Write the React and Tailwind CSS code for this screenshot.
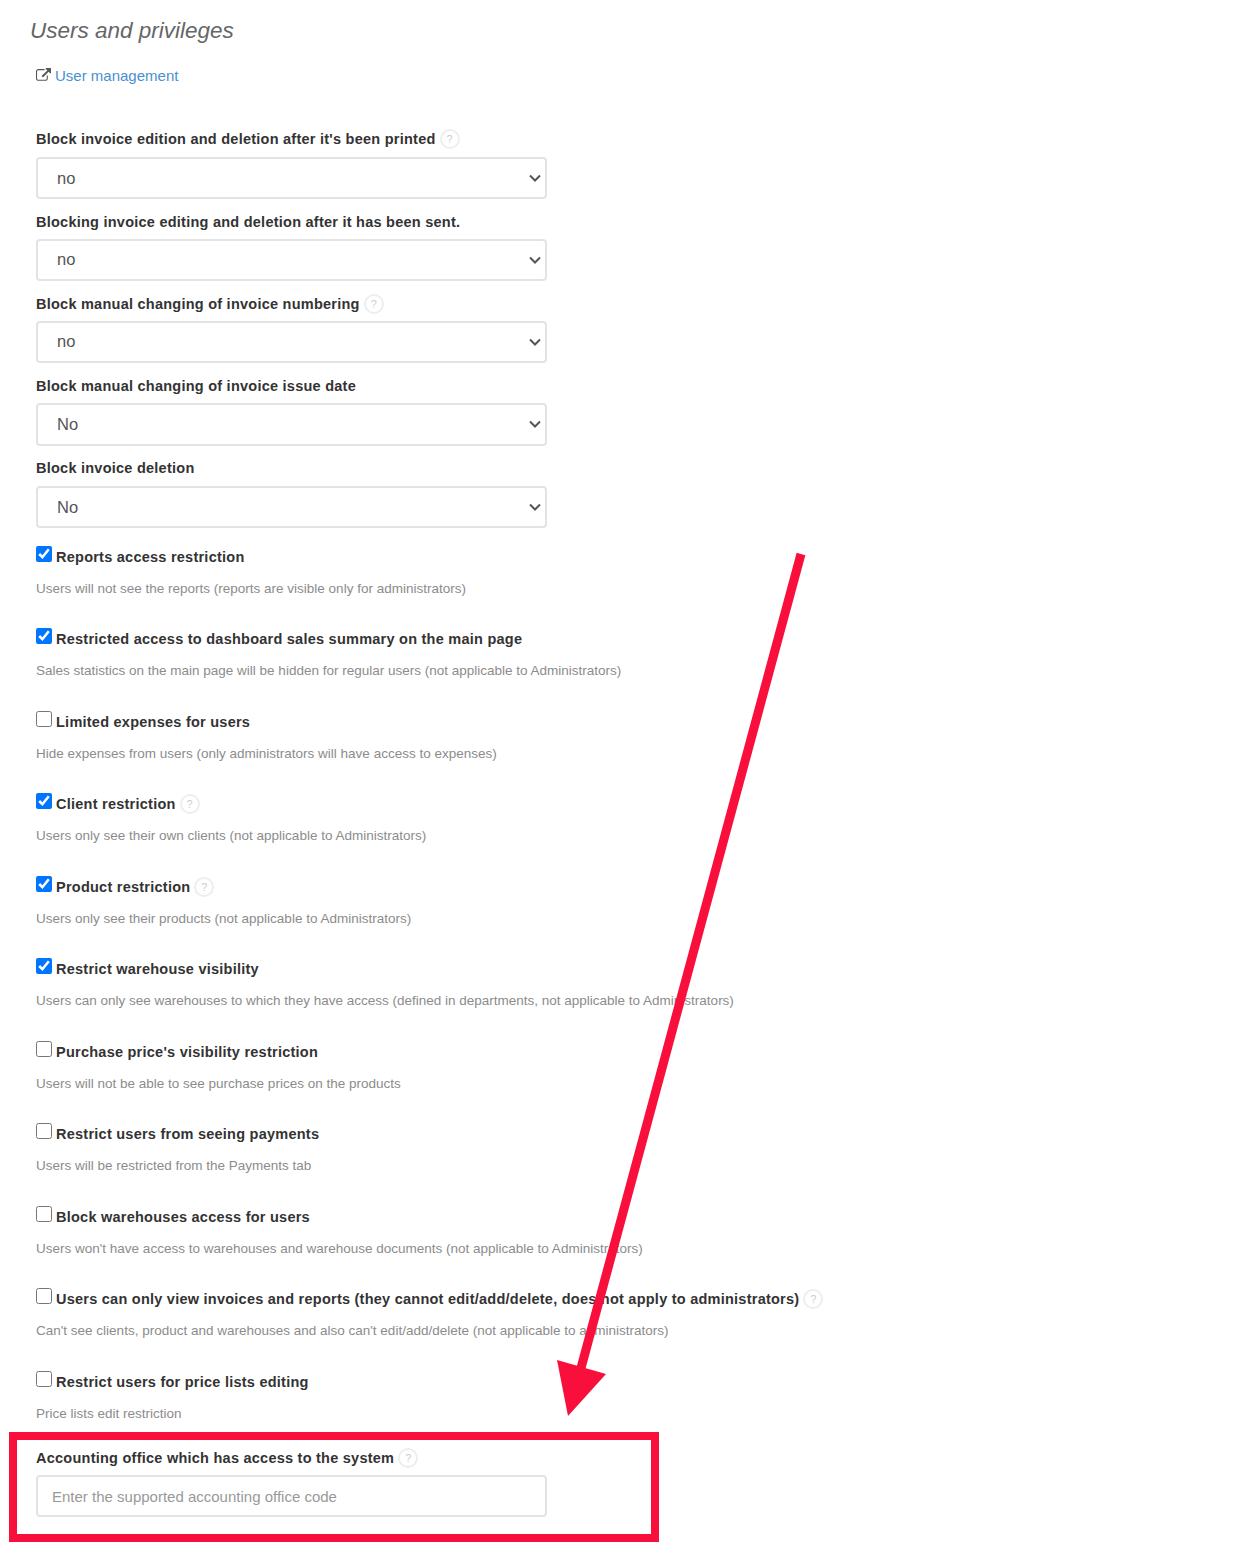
import React from "react";

function Help() {
  return (
    <span className="ml-[4px] inline-flex h-[20px] w-[20px] shrink-0 items-center justify-center rounded-full border-2 border-[#eeeeee] text-[11px] font-normal tracking-normal text-[#cccccc]">?</span>
  );
}

function SelectField({ label, help, value, className, boxClass, selectClass }) {
  return (
    <div className={className}>
      <div className="flex h-[18px] items-center text-[14.5px] font-bold leading-[18px] tracking-[0.245px] text-[#333333]">
        {label}
        {help && <Help />}
      </div>
      <div className={`relative w-[511px] ${boxClass}`}>
        <select
          defaultValue={value}
          className={`block w-full appearance-none rounded-[4px] border-2 border-[#e3e3e3] bg-white pl-[19px] pr-[24px] text-[16.5px] text-[#555555] ${selectClass}`}
        >
          <option>{value}</option>
        </select>
        <svg width="12" height="8" viewBox="0 0 12 8" fill="none" className="pointer-events-none absolute right-[6px] top-[17px]">
          <path d="M1 1.5 L6 6.5 L11 1.5" stroke="#555555" strokeWidth="2" />
        </svg>
      </div>
    </div>
  );
}

function CheckField({ label, desc, checked, help }) {
  return (
    <div className="h-[82.5px]">
      <div className="flex h-[20px] items-center text-[14.5px] font-bold leading-[18px] tracking-[0.245px] text-[#333333]">
        <input type="checkbox" defaultChecked={checked} className="m-0 mr-[4px] h-[16px] w-[16px] -translate-y-[3px]" />
        {label}
        {help && <Help />}
      </div>
      <p className="mt-[13.3px] text-[13.5px] leading-[18px] text-[#8c8c8c]">{desc}</p>
    </div>
  );
}

const selects = [
  { label: "Block invoice edition and deletion after it's been printed", help: true, value: "no", className: "h-[82.5px]", boxClass: "mt-[9px]", selectClass: "h-[42px]" },
  { label: "Blocking invoice editing and deletion after it has been sent.", value: "no", className: "h-[82px]", boxClass: "mt-[8px]", selectClass: "h-[42px]" },
  { label: "Block manual changing of invoice numbering", help: true, value: "no", className: "h-[82px]", boxClass: "mt-[8px]", selectClass: "h-[42.5px]" },
  { label: "Block manual changing of invoice issue date", value: "No", className: "h-[82.5px]", boxClass: "mt-[8px]", selectClass: "h-[43px]" },
  { label: "Block invoice deletion", value: "No", className: "h-[87.5px]", boxClass: "mt-[9px]", selectClass: "h-[42px]" },
];

const checks = [
  { label: "Reports access restriction", desc: "Users will not see the reports (reports are visible only for administrators)", checked: true },
  { label: "Restricted access to dashboard sales summary on the main page", desc: "Sales statistics on the main page will be hidden for regular users (not applicable to Administrators)", checked: true },
  { label: "Limited expenses for users", desc: "Hide expenses from users (only administrators will have access to expenses)" },
  { label: "Client restriction", help: true, desc: "Users only see their own clients (not applicable to Administrators)", checked: true },
  { label: "Product restriction", help: true, desc: "Users only see their products (not applicable to Administrators)", checked: true },
  { label: "Restrict warehouse visibility", desc: "Users can only see warehouses to which they have access (defined in departments, not applicable to Administrators)", checked: true },
  { label: "Purchase price's visibility restriction", desc: "Users will not be able to see purchase prices on the products" },
  { label: "Restrict users from seeing payments", desc: "Users will be restricted from the Payments tab" },
  { label: "Block warehouses access for users", desc: "Users won't have access to warehouses and warehouse documents (not applicable to Administrators)" },
  { label: "Users can only view invoices and reports (they cannot edit/add/delete, does not apply to administrators)", help: true, desc: "Can't see clients, product and warehouses and also can't edit/add/delete (not applicable to administrators)" },
  { label: "Restrict users for price lists editing", desc: "Price lists edit restriction" },
];

export default function App() {
  return (
    <div className="relative h-[1550px] w-[1246px] overflow-hidden bg-white pl-[36px] font-['Liberation_Sans',Arial,sans-serif]">
      <h2 className="-ml-[6px] pt-[17px] text-[22.5px] font-normal italic leading-[28px] text-[#666666]">Users and privileges</h2>
      <a className="mt-[21px] flex h-[20px] items-center text-[15px] text-[#4a90d0]">
        <svg width="15" height="15" viewBox="0 0 1792 1792" fill="#555555" className="mr-[4px] -translate-y-[1px]">
          <path d="M1408 928v320q0 119-84.5 203.5t-203.5 84.5h-832q-119 0-203.5-84.5t-84.5-203.5v-832q0-119 84.5-203.5t203.5-84.5h704q14 0 23 9t9 23v64q0 14-9 23t-23 9h-704q-66 0-113 47t-47 113v832q0 66 47 113t113 47h832q66 0 113-47t47-113v-320q0-14 9-23t23-9h64q14 0 23 9t9 23zm384-864v512q0 26-19 45t-45 19-45-19l-176-176-652 652q-10 10-23 10t-23-10l-114-114q-10-10-10-23t10-23l652-652-176-176q-19-19-19-45t19-45 45-19h512q26 0 45 19t19 45z" />
        </svg>
        User management
      </a>
      <div className="mt-[44px] flex flex-col">
        {selects.map((s) => (
          <SelectField key={s.label} {...s} />
        ))}
      </div>
      <div className="flex flex-col">
        {checks.map((c) => (
          <CheckField key={c.label} {...c} />
        ))}
      </div>
      <div className="-mt-[5px]">
        <div className="flex h-[18px] items-center text-[14.5px] font-bold leading-[18px] tracking-[0.245px] text-[#333333]">
          Accounting office which has access to the system
          <Help />
        </div>
        <input
          placeholder="Enter the supported accounting office code"
          className="mt-[8px] block h-[42px] w-[511px] rounded-[4px] border-2 border-[#e3e3e3] bg-white px-[14px] text-[15px] text-[#555555] placeholder:text-[#999999]"
        />
      </div>
      <div className="absolute left-[9px] top-[1432px] h-[110px] w-[650px] border-[8px] border-[#f90f3c]" />
      <svg className="absolute left-0 top-0" width="1246" height="1550" viewBox="0 0 1246 1550" fill="none">
        <path d="M801 554 L581 1368" stroke="#f90f3c" strokeWidth="9" />
        <path d="M557 1360 L606 1374 L568 1416 Z" fill="#f90f3c" />
      </svg>
    </div>
  );
}
